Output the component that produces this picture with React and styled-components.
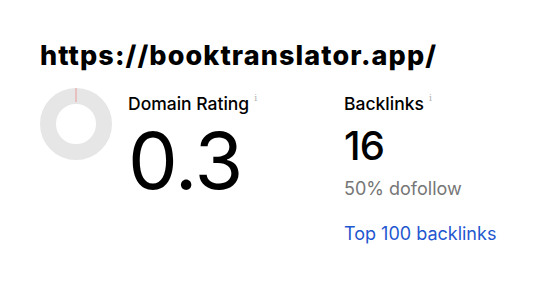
import React from 'react';
import styled, { createGlobalStyle } from 'styled-components';

const GlobalStyle = createGlobalStyle`
  body {
    margin: 0;
    background: #ffffff;
    font-family: Inter, "Noto Sans", sans-serif;
    color: #000000;
  }
`;

const Page = styled.div`
  width: 540px;
  height: 287px;
  box-sizing: border-box;
  padding: 38px 40px 0 40px;
`;

const Url = styled.h1`
  margin: 0;
  font-family: Inter, sans-serif;
  font-weight: 800;
  font-size: 27px;
  line-height: 36px;
  letter-spacing: 1.1px;
`;

const Stats = styled.div`
  display: flex;
  align-items: flex-start;
  margin-top: 14px;
`;

const DonutWrap = styled.div`
  width: 72px;
  height: 72px;
  flex: none;
`;

const RatingBlock = styled.div`
  margin-left: 16px;
  width: 216px;
  display: flex;
  flex-direction: column;
`;

const LinksBlock = styled.div`
  display: flex;
  flex-direction: column;
`;

const Label = styled.div`
  font-size: 17.5px;
  line-height: 32px;
  font-weight: 500;
  display: flex;
  align-items: flex-start;
`;

const Info = styled.span`
  font-size: 9px;
  line-height: 9px;
  color: #b0b0b0;
  margin-left: 5px;
  margin-top: 6px;
  font-family: "DejaVu Serif", serif;
`;

const BigValue = styled.div`
  font-size: 79px;
  line-height: 80px;
  font-weight: 400;
  letter-spacing: -1px;
  margin-top: 0px;
`;

const Value = styled.div`
  font-size: 40px;
  line-height: 44px;
  font-weight: 500;
  letter-spacing: -0.8px;
  margin-top: 4px;
`;

const Sub = styled.div`
  font-size: 18px;
  line-height: 22px;
  color: #767676;
  margin-top: 10px;
`;

const Link = styled.a`
  font-size: 18px;
  line-height: 22px;
  color: #1f57d0;
  text-decoration: none;
  margin-top: 23px;
`;

function Donut() {
  return (
    <svg width="72" height="72" viewBox="0 0 72 72">
      <circle cx="36" cy="36" r="28" fill="none" stroke="#e6e6e6" strokeWidth="16" />
      <line x1="36" y1="0" x2="36" y2="14" stroke="#e99a9a" strokeWidth="1" />
    </svg>
  );
}

export default function App() {
  return (
    <>
      <GlobalStyle />
      <Page>
        <Url>https://booktranslator.app/</Url>
        <Stats>
          <DonutWrap>
            <Donut />
          </DonutWrap>
          <RatingBlock>
            <Label>
              Domain Rating<Info>i</Info>
            </Label>
            <BigValue>0.3</BigValue>
          </RatingBlock>
          <LinksBlock>
            <Label>
              Backlinks<Info>i</Info>
            </Label>
            <Value>16</Value>
            <Sub>50% dofollow</Sub>
            <Link href="#">Top 100 backlinks</Link>
          </LinksBlock>
        </Stats>
      </Page>
    </>
  );
}
